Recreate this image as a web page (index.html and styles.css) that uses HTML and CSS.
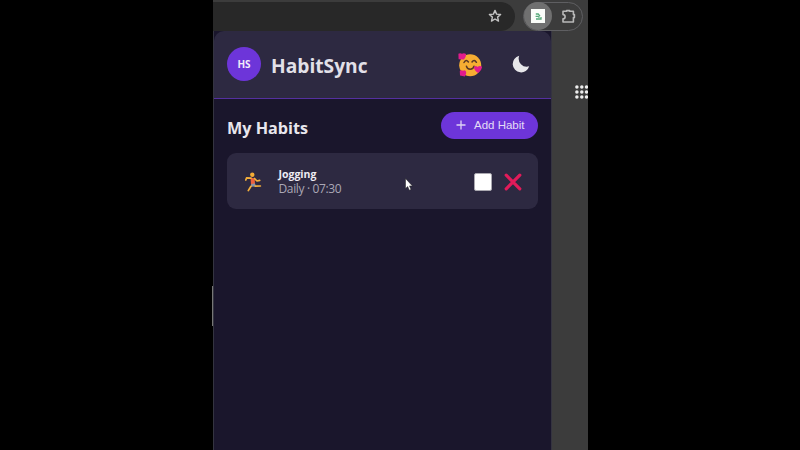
FILE: index.html
```html
<!DOCTYPE html>
<html lang="en">
<head>
<meta charset="utf-8">
<title>HabitSync</title>
<link rel="stylesheet" href="styles.css">
</head>
<body>
<main class="browser">
  <div class="toolbar">
    <div class="omnibox">
      <svg class="star" viewBox="0 0 14 14"><path d="M7 1.4 8.6 5.1 12.6 5.5 9.6 8.1 10.5 12.1 7 10 3.5 12.1 4.4 8.1 1.4 5.5 5.4 5.1Z"/></svg>
    </div>
    <div class="extensions">
      <div class="ext-active">
        <svg class="ext-logo" viewBox="0 0 14 14"><path fill="#fbfdf9" d="M0 0h14v14H0z"/><path fill="none" stroke="#55a978" stroke-width="1.3" d="M4.8 5H7.2L9 7.2M5 10H10V8M4.6 7.4H7L8.5 8.6"/></svg>
      </div>
      <svg class="puzzle" viewBox="0 0 16 16"><path d="M2 3.2H5.6V2.6H8.6V3.2H12.4V6.6H13.4V9.6H12.4V14H2V10.8A2.1 2.1 0 0 0 2 6.6Z"/></svg>
    </div>
  </div>
  <div class="content">
    <section class="popup">
      <header class="header">
        <div class="avatar">HS</div>
        <h1 class="brand">HabitSync</h1>
        <svg class="mood" viewBox="0 0 24 24">
          <circle cx="12.2" cy="12.2" r="11" fill="#f6ad32"/>
          <path d="M6 9.5Q8 5.8 10.4 9M14 9Q16.2 5.8 18.4 9.3M8.4 13.2Q9 16.2 12.2 16.2Q15.4 16.2 16 13.2" fill="none" stroke="#5b3824" stroke-width="1.5" stroke-linecap="round"/>
          <g fill="#e21b8d"><path d="M.4.8Q2-.2 4 .8Q6-.3 8 1Q8.2 4.5 6 6.6L.6 6.2Z"/><path d="M16 14.2Q17.6 12 19.5 14Q21.4 12 24 13.6Q24.2 17 20.2 20Q16 17.4 16 14.2Z"/><path d="M1.8 18Q3.3 16.4 5 17.8Q7.4 16.5 8.2 19Q8.5 21.5 6.8 23.4L2 22.6Z"/></g>
        </svg>
        <svg class="moon" viewBox="0 0 18 18"><path d="M7.2.8A8.4 8.4 0 1 0 17.2 11.3A8.1 8.1 0 0 1 7.2.8Z"/></svg>
      </header>
      <div class="body">
        <div class="title-row">
          <h2 class="title">My Habits</h2>
          <button class="add"><svg class="plus" viewBox="0 0 10 10"><path d="M5 .5v9M.5 5h9"/></svg><span>Add Habit</span></button>
        </div>
        <article class="habit">
          <svg class="runner" viewBox="0 0 18 20">
            <path d="M6.5 5.5 10.7 6.5 11 12 7 13Z" fill="#ef633c"/>
            <path d="M7.4 12 11 11.5 12 14.4 6.6 14.8Z" fill="#8794a5"/>
            <path d="M7 6.2 2.6 5.8 1.8 8M10.5 6.5 13 9 15.7 8.4M7 14.3 5.6 16.5 4.3 18.6M11.2 14.2 16.4 14" fill="none" stroke="#f5b03b" stroke-width="1.7" stroke-linecap="round" stroke-linejoin="round"/>
            <circle cx="8.3" cy="2.7" r="2.2" fill="#f5ad35"/>
          </svg>
          <div class="info"><strong class="name">Jogging</strong><span class="when">Daily · 07:30</span></div>
          <div class="check"></div>
          <svg class="remove" viewBox="0 0 18 18"><path d="M2.2 2.2 15.8 15.8M15.8 2.2 2.2 15.8"/></svg>
        </article>
      </div>
    </section>
    <aside class="page">
      <svg class="apps" viewBox="0 0 13 14"><g><circle cx="1.9" cy="2" r="1.75"/><circle cx="6.8" cy="2" r="1.75"/><circle cx="11.5" cy="2" r="1.75"/><circle cx="1.9" cy="7" r="1.75"/><circle cx="6.8" cy="7" r="1.75"/><circle cx="11.5" cy="7" r="1.75"/><circle cx="1.9" cy="12" r="1.75"/><circle cx="6.8" cy="12" r="1.75"/><circle cx="11.5" cy="12" r="1.75"/></g></svg>
    </aside>
  </div>
  <div class="edge"></div>
  <svg class="cursor" viewBox="0 0 8 13"><path d="M.5.5V10.6L2.7 8.5 4.3 12.2 6 11.4 4.5 7.9H7.4Z"/></svg>
</main>
</body>
</html>
```

FILE: styles.css
```css
* { box-sizing: border-box; }
body { margin: 0; background: #000; font-family: "Open Sans", "Noto Sans", sans-serif; overflow: hidden; }
svg { display: block; flex: none; }
.browser { position: relative; display: flex; flex-direction: column; width: 375px; height: 450px; margin-left: 213px; background: #3c3c3c; }
.toolbar { display: flex; align-items: center; gap: 8px; height: 31px; padding-top: 1px; flex: none; }
.omnibox { display: flex; align-items: center; justify-content: flex-end; width: 302px; height: 29px; padding-right: 13px; background: #282828; border-radius: 0 15px 15px 0; }
.star { width: 14px; height: 14px; fill: none; stroke: #c3c3c3; stroke-width: 1.4; stroke-linejoin: round; }
.extensions { display: flex; align-items: center; gap: 9px; width: 60px; height: 29px; border: 1.5px solid #5f5f62; border-radius: 15px; }
.ext-active { display: grid; place-items: center; width: 28px; height: 28px; border-radius: 50%; background: #707070; flex: none; }
.ext-logo { width: 14px; height: 14px; }
.puzzle { width: 16px; height: 16px; fill: none; stroke: #b9b9b9; stroke-width: 1.6; stroke-linejoin: round; }
.content { display: flex; flex: 1; background: #1a162c; }
.popup { width: 338px; border-left: 1px solid #343440; background: #1a162c; }
.header { display: flex; align-items: center; height: 68px; padding: 0 21px 1px 13px; background: #2d2941; border-bottom: 1px solid #5530a0; border-radius: 10px 10px 0 0; }
.avatar { display: grid; place-items: center; width: 34px; height: 34px; border-radius: 50%; background: #6d35d9; color: #f0ebfa; font-size: 10px; font-weight: 700; }
.brand { flex: 1; margin: 0 0 0 10px; padding-top: 3px; color: #e2e0e8; font-size: 19.2px; line-height: 26px; font-weight: 700; }
.mood { width: 24px; height: 24px; margin: 2px 30px 0 0; }
.moon { width: 18px; height: 18px; fill: #e7e7ea; }
.body { padding: 13px 13px 0; }
.title-row { display: flex; align-items: center; justify-content: space-between; height: 27px; margin-bottom: 14px; }
.title { margin: 0; padding-top: 4px; color: #e8e6ed; font-size: 16.2px; line-height: 24px; font-weight: 700; }
.add { display: flex; align-items: center; gap: 8px; width: 97px; height: 27px; padding: 0 0 1px 15px; border: 0; border-radius: 14px; background: #6d35d9; color: #e4dcf6; font: 11.5px "Liberation Sans", sans-serif; white-space: nowrap; }
.plus { width: 10px; height: 10px; fill: none; stroke: #ddd2f5; stroke-width: 1.3; }
.habit { display: flex; align-items: center; height: 56px; padding: 0 16px 0 17px; border-radius: 9px; background: #2d2941; }
.runner { width: 18px; height: 20px; margin-top: 1px; }
.info { display: flex; flex: 1; flex-direction: column; margin-left: 16.5px; }
.name { color: #eeecf2; font-size: 10.5px; line-height: 14px; }
.when { color: #aaa7b5; font-size: 12px; line-height: 15px; letter-spacing: -.35px; }
.check { width: 18px; height: 18px; margin: 1px 12px 0 0; background: #fff; border: 1px solid #aaa8b0; border-radius: 2px; }
.remove { width: 18px; height: 18px; margin-top: 1px; fill: none; stroke: #e21b5a; stroke-width: 3.2; stroke-linecap: round; }
.page { flex: 1; padding: 54px 0 0 23px; background: #3c3c3c; border-left: 1px solid #343340; }
.apps { width: 13px; height: 14px; fill: #eeeeee; }
.edge { position: absolute; left: -1px; top: 286px; width: 1px; height: 40px; background: #777; }
.cursor { position: absolute; left: 192px; top: 178px; width: 8px; height: 13px; fill: #fff; stroke: #222; stroke-width: .5; }
```
